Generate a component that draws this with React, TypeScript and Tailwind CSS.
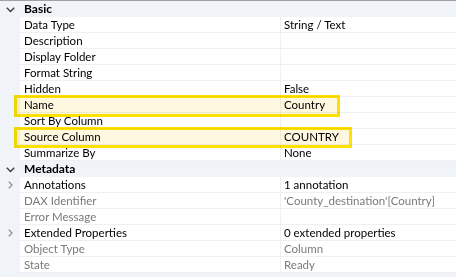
import React from "react";

type Row = { name: string; value?: string; dim?: boolean; expand?: boolean };

const basic: Row[] = [
  { name: "Data Type", value: "String / Text" },
  { name: "Description" },
  { name: "Display Folder" },
  { name: "Format String" },
  { name: "Hidden", value: "False" },
  { name: "Name", value: "Country" },
  { name: "Sort By Column" },
  { name: "Source Column", value: "COUNTRY" },
  { name: "Summarize By", value: "None" },
];

const meta: Row[] = [
  { name: "Annotations", value: "1 annotation", expand: true },
  { name: "DAX Identifier", value: "'County_destination'[Country]", dim: true },
  { name: "Error Message", dim: true },
  { name: "Extended Properties", value: "0 extended properties", expand: true },
  { name: "Object Type", value: "Column", dim: true },
  { name: "State", value: "Ready", dim: true },
];

function ChevronDown() {
  return (
    <svg width="9" height="6" viewBox="0 0 9 6" className="block">
      <path d="M0.8 0.8 L4.5 4.5 L8.2 0.8" fill="none" stroke="#3a3a3a" strokeWidth="1.3" />
    </svg>
  );
}

function ChevronRight() {
  return (
    <svg width="5" height="8" viewBox="0 0 5 8" className="block">
      <path d="M0.7 0.7 L4 4 L0.7 7.3" fill="none" stroke="#8a8a8a" strokeWidth="1.2" />
    </svg>
  );
}

function Header({ title }: { title: string }) {
  return (
    <div className="flex h-[16px] items-center">
      <div className="flex w-[20px] shrink-0 items-center justify-center pl-[1px] pt-[1px]">
        <ChevronDown />
      </div>
      <div className="pl-[4px] text-[12px] font-bold leading-[16px] text-black">{title}</div>
    </div>
  );
}

function PropRow({ row }: { row: Row }) {
  const color = row.dim ? "text-[#7a7a7a]" : "text-black";
  return (
    <div className="flex h-[16px]">
      <div className="flex w-[20px] shrink-0 items-center justify-center pl-[1px]">
        {row.expand ? <ChevronRight /> : null}
      </div>
      <div className="flex flex-1 border-b border-[#f0f0f0] bg-white">
        <div className={`w-[261px] shrink-0 border-r border-[#f0f0f0] pl-[4px] text-[11.5px] leading-[15px] ${color}`}>
          {row.name}
        </div>
        <div className={`flex-1 pl-[3px] text-[11.5px] leading-[15px] ${color}`}>{row.value ?? ""}</div>
      </div>
    </div>
  );
}

export default function App() {
  return (
    <div
      className="relative h-[277px] w-[456px] overflow-hidden border-t border-[#a0a0a0] bg-[#f0f3f8]"
      style={{ fontFamily: "Lato, 'Open Sans', sans-serif" }}
    >
      <Header title="Basic" />
      {basic.map((r) => (
        <PropRow key={r.name} row={r} />
      ))}
      <Header title="Metadata" />
      {meta.map((r) => (
        <PropRow key={r.name} row={r} />
      ))}

      <div className="pointer-events-none absolute left-[14px] top-[94px] h-[22px] w-[326px] border-[3px] border-[#ffe100] bg-[#fdf8df] mix-blend-multiply" />
      <div className="pointer-events-none absolute left-[14px] top-[126px] h-[21px] w-[338px] border-[3px] border-[#ffe100] bg-[#fdf8df] mix-blend-multiply" />
    </div>
  );
}
